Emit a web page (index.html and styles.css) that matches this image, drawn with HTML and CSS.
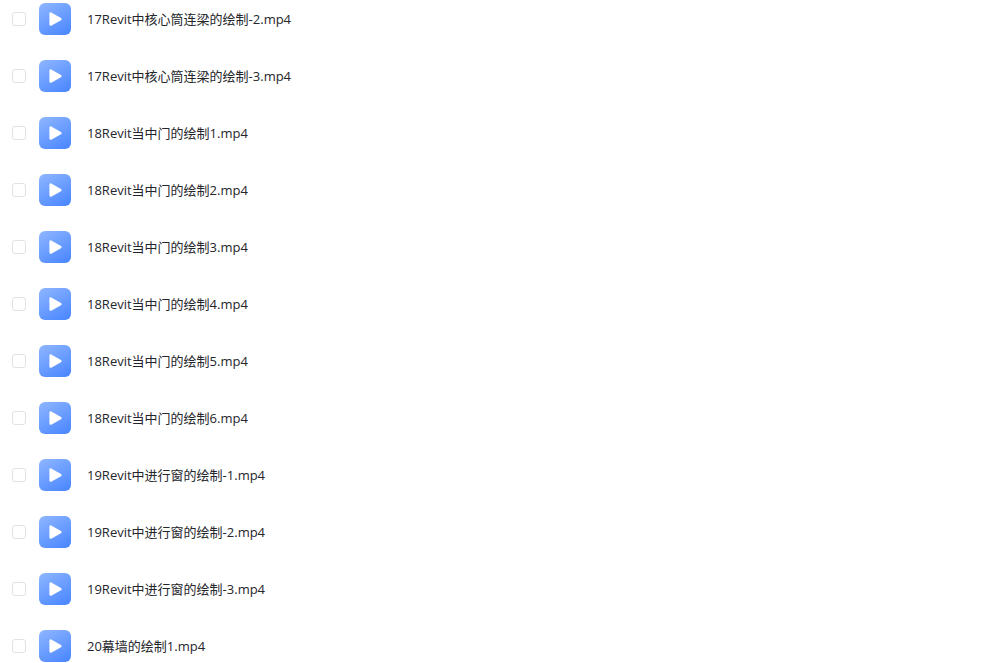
FILE: index.html
```html
<!DOCTYPE html>
<html lang="zh-CN">
<head>
  <meta charset="UTF-8">
  <title>Revit</title>
  <link rel="stylesheet" href="styles.css">
</head>
<body>
  <svg class="defs" aria-hidden="true">
    <defs>
      <linearGradient id="blue" x1="0.2" y1="0" x2="0.8" y2="1">
        <stop offset="0" stop-color="#8ab3ff"/>
        <stop offset="1" stop-color="#4c88ff"/>
      </linearGradient>
      <symbol id="video" viewBox="0 0 32 32">
        <rect width="32" height="32" rx="6" fill="url(#blue)"/>
        <path d="M11.6 10.6 V21.6 L21.4 16.1 Z" fill="#fff" stroke="#fff" stroke-width="2.4" stroke-linejoin="round"/>
      </symbol>
    </defs>
  </svg>

  <ul class="file-list">
    <li class="file">
      <input type="checkbox" id="file1">
      <svg class="icon"><use href="#video"/></svg>
      <label for="file1">17Revit中核心筒连梁的绘制-2.mp4</label>
    </li>
    <li class="file">
      <input type="checkbox" id="file2">
      <svg class="icon"><use href="#video"/></svg>
      <label for="file2">17Revit中核心筒连梁的绘制-3.mp4</label>
    </li>
    <li class="file">
      <input type="checkbox" id="file3">
      <svg class="icon"><use href="#video"/></svg>
      <label for="file3">18Revit当中门的绘制1.mp4</label>
    </li>
    <li class="file">
      <input type="checkbox" id="file4">
      <svg class="icon"><use href="#video"/></svg>
      <label for="file4">18Revit当中门的绘制2.mp4</label>
    </li>
    <li class="file">
      <input type="checkbox" id="file5">
      <svg class="icon"><use href="#video"/></svg>
      <label for="file5">18Revit当中门的绘制3.mp4</label>
    </li>
    <li class="file">
      <input type="checkbox" id="file6">
      <svg class="icon"><use href="#video"/></svg>
      <label for="file6">18Revit当中门的绘制4.mp4</label>
    </li>
    <li class="file">
      <input type="checkbox" id="file7">
      <svg class="icon"><use href="#video"/></svg>
      <label for="file7">18Revit当中门的绘制5.mp4</label>
    </li>
    <li class="file">
      <input type="checkbox" id="file8">
      <svg class="icon"><use href="#video"/></svg>
      <label for="file8">18Revit当中门的绘制6.mp4</label>
    </li>
    <li class="file">
      <input type="checkbox" id="file9">
      <svg class="icon"><use href="#video"/></svg>
      <label for="file9">19Revit中进行窗的绘制-1.mp4</label>
    </li>
    <li class="file">
      <input type="checkbox" id="file10">
      <svg class="icon"><use href="#video"/></svg>
      <label for="file10">19Revit中进行窗的绘制-2.mp4</label>
    </li>
    <li class="file">
      <input type="checkbox" id="file11">
      <svg class="icon"><use href="#video"/></svg>
      <label for="file11">19Revit中进行窗的绘制-3.mp4</label>
    </li>
    <li class="file">
      <input type="checkbox" id="file12">
      <svg class="icon"><use href="#video"/></svg>
      <label for="file12">20幕墙的绘制1.mp4</label>
    </li>
  </ul>
</body>
</html>
```
FILE: styles.css
```css
body {
  margin: 0;
  background-color: #fff;
  color: #25262b;
  font-family: "Open Sans", "Noto Sans CJK SC", sans-serif;
  font-size: 13px;
  line-height: 20px;
}

.defs {
  position: absolute;
  width: 0;
  height: 0;
}

.file-list {
  display: flex;
  flex-direction: column;
  gap: 25px;
  margin: 0;
  padding: 3px 12px 0;
  list-style: none;
}

.file {
  display: flex;
  align-items: center;
}

.file input {
  appearance: none;
  flex: none;
  box-sizing: border-box;
  width: 14px;
  height: 14px;
  margin: 0 13px 0 0;
  border: 1px solid #e2e2e4;
  border-radius: 3px;
  background-color: #fff;
  cursor: pointer;
}

.file input:checked {
  border-color: #4c88ff;
  background-color: #4c88ff;
}

.icon {
  flex: none;
  width: 32px;
  height: 32px;
  margin-right: 16px;
}

.file label {
  cursor: pointer;
}
```
